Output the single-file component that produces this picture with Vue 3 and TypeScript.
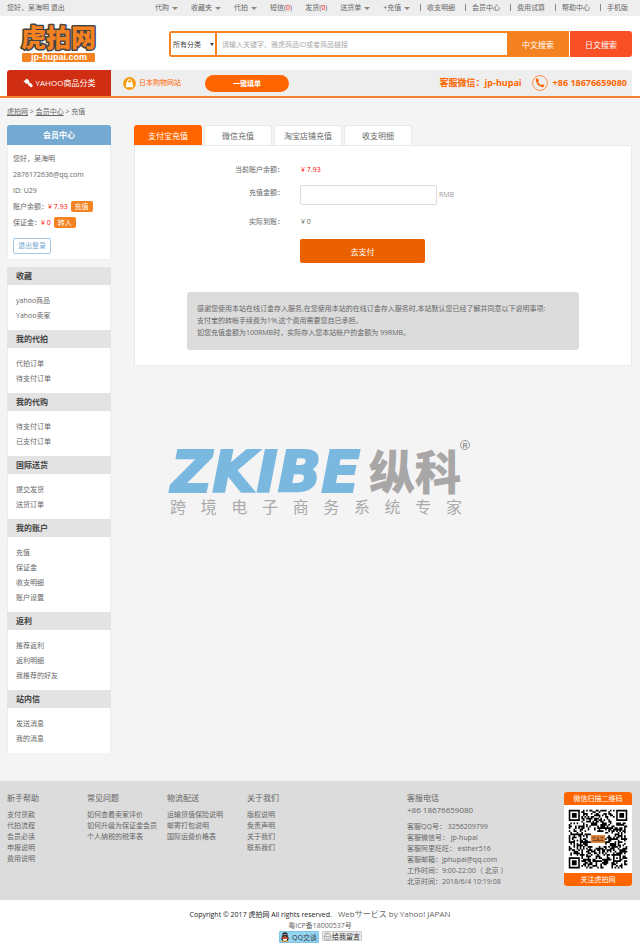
<script setup lang="ts">
import { ref } from 'vue'

interface MenuSection { title: string; items: string[] }

const leftMenus: { label: string; count?: string; drop?: boolean }[] = [
  { label: '代购', drop: true },
  { label: '收藏夹', drop: true },
  { label: '代拍', drop: true },
  { label: '短信', count: '0' },
  { label: '发货', count: '0' },
  { label: '送货单', drop: true },
  { label: '+充值', drop: true },
]
const rightMenus = ['收支明细', '会员中心', '费用试算', '帮助中心', '手机版']

const sections: MenuSection[] = [
  { title: '收藏', items: ['yahoo商品', 'Yahoo卖家'] },
  { title: '我的代拍', items: ['代拍订单', '待支付订单'] },
  { title: '我的代购', items: ['待支付订单', '已支付订单'] },
  { title: '国际送货', items: ['提交发货', '送货订单'] },
  { title: '我的账户', items: ['充值', '保证金', '收支明细', '账户设置'] },
  { title: '返利', items: ['推荐返利', '返利明细', '我推荐的好友'] },
  { title: '站内信', items: ['发送消息', '我的消息'] },
]

const tabs = ['支付宝充值', '微信充值', '淘宝店铺充值', '收支明细']
const activeTab = ref(0)
const keyword = ref('')
const amount = ref('')

const helpColumns: MenuSection[] = [
  { title: '新手帮助', items: ['支付货款', '代拍流程', '会员必读', '申报说明', '费用说明'] },
  { title: '常见问题', items: ['如何查看卖家评价', '如何升级为保证金会员', '个人纳税的税率表'] },
  { title: '物流配送', items: ['运输货值保险说明', '邮寄打包说明', '国际运费价格表'] },
  { title: '关于我们', items: ['版权说明', '免责声明', '关于我们', '联系我们'] },
]
const contacts = [
  '客服QQ号： 3256209799',
  '客服微信号： jp-hupai',
  '客服阿里旺旺： esther516',
  '客服邮箱：jphupai@qq.com',
  '工作时间：9:00-22:00（ 北京 ）',
  '北京时间：2018/6/4 10:19:08',
]
const slogan = Array.from('跨境电子商务系统专家')

const QR = 37
function finderModule(x: number, y: number): boolean | null {
  for (const [ox, oy] of [[0, 0], [QR - 7, 0], [0, QR - 7]]) {
    const dx = x - ox
    const dy = y - oy
    if (dx >= -1 && dx <= 7 && dy >= -1 && dy <= 7) {
      const d = Math.max(Math.abs(dx - 3), Math.abs(dy - 3))
      return d === 3 || d <= 1
    }
  }
  const a = Math.max(Math.abs(x - 30), Math.abs(y - 30))
  return a <= 2 ? a !== 1 : null
}
function buildQr(): string {
  let seed = 20180604
  let path = ''
  for (let y = 0; y < QR; y++) {
    let run = 0
    for (let x = 0; x <= QR; x++) {
      seed = (seed * 16807) % 2147483647
      const fixed = finderModule(x, y)
      const centre = Math.abs(x - 18) <= 4 && Math.abs(y - 18) <= 4
      const on = x < QR && (fixed !== null ? fixed : !centre && seed / 2147483647 < 0.5)
      if (on) {
        run++
      } else if (run > 0) {
        path += `M${x - run} ${y}h${run}v1.1h-${run}z`
        run = 0
      }
    }
  }
  return path
}
const qrPath = buildQr()
</script>

<template>
  <div class="page">
    <div class="topbar">
      <div class="greeting">您好，吴海明 <a href="#">退出</a></div>
      <nav class="top-left">
        <a v-for="m in leftMenus" :key="m.label" href="#">
          {{ m.label }}<template v-if="m.count">(<b>{{ m.count }}</b>)</template><i v-if="m.drop" class="caret"></i>
        </a>
      </nav>
      <nav class="top-right">
        <a v-for="m in rightMenus" :key="m" href="#">{{ m }}</a>
      </nav>
    </div>

    <header class="header">
      <a class="logo" href="#" aria-label="虎拍网">
        <svg width="76" height="38" viewBox="0 0 76 38">
          <text class="logo-cn" x="0" y="22">虎拍网</text>
          <rect x="1" y="28" width="73" height="9" rx="1" fill="#f58220" />
          <text class="logo-en" x="38" y="35" text-anchor="middle">jp-hupai.com</text>
        </svg>
      </a>
      <form class="search" @submit.prevent>
        <div class="search-box">
          <select aria-label="分类"><option>所有分类</option></select>
          <input v-model="keyword" type="text" aria-label="搜索" placeholder="请输入关键字、雅虎商品ID或者商品链接" />
        </div>
        <button type="submit" class="cn">中文搜索</button>
        <button type="button" class="jp">日文搜索</button>
      </form>
    </header>

    <div class="navbar">
      <a class="category" href="#">
        <svg width="10" height="10" viewBox="0 0 10 10" fill="#fff">
          <path d="M3.800.4 6.600 3.200 5.900 4l1 1 .6-.3L10 7.800 8.200 9.600 5.100 6.900l.2-.6-.9-.9-.8.700L.4 3.200 1.400 2.700 3.400.9z" />
        </svg>
        YAHOO商品分类
      </a>
      <div class="nav-rest">
        <a class="shops" href="#">
          <svg width="13" height="13" viewBox="0 0 13 13">
            <circle cx="6.500" cy="6.500" r="6.400" fill="#f39c12" />
            <path d="M3.500 5.300h6l.7 5H2.800z" fill="#fff" />
            <path d="M4.500 6V4.600a2 2 0 0 1 4 0V6" fill="none" stroke="#fff" stroke-width="1" />
          </svg>
          日本购物网站
        </a>
        <a class="pill" href="#">一键填单</a>
        <span class="wechat">客服微信：jp-hupai</span>
        <svg class="phone-icon" width="16" height="16" viewBox="0 0 16 16">
          <circle cx="8" cy="8" r="7.400" fill="none" stroke="#ff7a20" stroke-width="0.800" />
          <path d="M5 3.300 3.800 4.300c-.3 3.800 3.600 7.900 7.400 8l1.200-1.200c.2-.3.100-.5-.1-.7L10.800 9.300c-.3-.2-.6-.1-.8.1l-.7.700C8 9.500 6.700 8.200 6.100 6.900l.7-.7c.2-.2.200-.5.100-.8L5.800 3.500c-.2-.3-.5-.4-.8-.2z" fill="#ff6600" />
        </svg>
        <span class="phone">+86 18676659080</span>
      </div>
    </div>

    <div class="crumbs"><a href="#">虎拍网</a> &gt; <a href="#">会员中心</a> &gt; 充值</div>

    <div class="content">
      <aside class="sidebar">
        <section class="member">
          <h2>会员中心</h2>
          <div class="member-body">
            <p>您好，吴海明</p>
            <p>2876172636@qq.com</p>
            <p>ID: U29</p>
            <p>账户余额：<em>¥ 7.93</em> <button type="button" class="tag">充值</button></p>
            <p>保证金：<em>¥ 0</em> <button type="button" class="tag">转入</button></p>
            <button type="button" class="logout">退出登录</button>
          </div>
        </section>
        <nav class="menu">
          <section v-for="s in sections" :key="s.title">
            <h3>{{ s.title }}</h3>
            <ul>
              <li v-for="i in s.items" :key="i"><a href="#">{{ i }}</a></li>
            </ul>
          </section>
        </nav>
      </aside>

      <main class="main">
        <div class="tabs" role="tablist">
          <button
            v-for="(t, i) in tabs" :key="t" type="button" role="tab"
            :aria-selected="activeTab === i" :class="{ active: activeTab === i }" @click="activeTab = i"
          >{{ t }}</button>
        </div>
        <div class="panel">
          <form class="form" @submit.prevent>
            <span class="label">当前账户余额：</span>
            <span class="value red">¥ 7.93</span>
            <label class="label amount-label" for="amount">充值金额：</label>
            <span class="value amount"><input id="amount" v-model="amount" type="text" /><small>RMB</small></span>
            <span class="label">实际到账：</span>
            <span class="value">¥ 0</span>
            <button type="submit" class="pay">去支付</button>
          </form>
          <div class="notice">
            <p>感谢您使用本站在线订金存入服务,在您使用本站的在线订金存入服务时,本站默认您已经了解并同意以下说明事项:</p>
            <p>支付宝的转帐手续费为1%,这个费用需要您自已承担。</p>
            <p>如您充值金额为100RMB时，实际存入您本站帐户的金额为 99RMB。</p>
          </div>
        </div>
        <div class="watermark">
          <svg width="304" height="56" viewBox="0 0 304 56">
            <text class="wm-en" x="2" y="52">ZKIBE</text>
            <text class="wm-cn" x="200" y="49">纵科</text>
            <circle cx="296" cy="5" r="4.500" fill="none" stroke="#8f8f8f" stroke-width="0.900" />
            <text class="wm-r" x="296" y="8" text-anchor="middle">R</text>
          </svg>
          <div class="slogan"><span v-for="c in slogan" :key="c">{{ c }}</span></div>
        </div>
      </main>
    </div>

    <footer class="footer">
      <div class="footer-cols">
        <section v-for="c in helpColumns" :key="c.title">
          <h4>{{ c.title }}</h4>
          <ul><li v-for="i in c.items" :key="i"><a href="#">{{ i }}</a></li></ul>
        </section>
        <section>
          <h4>客服电话</h4>
          <div class="tel">+86 18676659080</div>
          <ul><li v-for="c in contacts" :key="c">{{ c }}</li></ul>
        </section>
      </div>
      <div class="qr">
        <div class="qr-bar">微信扫描二维码</div>
        <svg viewBox="-3 -3 43 43">
          <path :d="qrPath" fill="#000" />
          <rect x="14" y="16" width="9" height="5" fill="#d9853b" />
          <path d="M15 17h2v1h-2zM18 17h1v2h-1zM20 17h2v1h-2zM15 19h7v1h-7z" fill="#8a4a1c" />
        </svg>
        <div class="qr-bar">关注虎拍网</div>
      </div>
    </footer>

    <div class="legal">
      <p><strong>Copyright © 2017 虎拍网 All rights reserved.</strong><span>Webサービス by Yahoo! JAPAN</span></p>
      <p>粤ICP备18000537号</p>
      <div class="chat">
        <a class="qq" href="#">
          <svg width="10" height="10" viewBox="0 0 10 10">
            <ellipse cx="5" cy="6.400" rx="3.600" ry="3" fill="#222" />
            <ellipse cx="5" cy="6.800" rx="2.200" ry="2.200" fill="#fff" />
            <circle cx="5" cy="3" r="2.700" fill="#222" />
            <circle cx="4" cy="2.600" r="0.700" fill="#fff" />
            <circle cx="6" cy="2.600" r="0.700" fill="#fff" />
            <path d="M3.300 3.900h3.400L5 4.800z" fill="#f7a700" />
            <path d="M2 5q3 1.500 6 0v1.200q-3 1.400-6 0z" fill="#e2231a" />
            <path d="M1.500 8.800h3v1h-3zM5.500 8.800h3v1h-3z" fill="#f7a700" />
          </svg>
          QQ交谈
        </a>
        <a class="msg" href="#">
          <svg width="9" height="9" viewBox="0 0 9 9" fill="none" stroke="#999" stroke-width="0.700">
            <circle cx="4.500" cy="5" r="3.400" />
            <path d="M1.200 4.500h6.600M3 6.500q1.500 1 3 0M2 2l2-1h2" />
          </svg>
          给我留言
        </a>
      </div>
    </div>
  </div>
</template>

<style>
body {
  background: #f4f4f4;
}
</style>

<style scoped>
.page {
  font: 7px/12px "Open Sans", "Noto Sans CJK SC", sans-serif;
  color: #666;
}
.page * {
  box-sizing: border-box;
}
a {
  color: inherit;
  text-decoration: none;
}
p, h2, h3, h4, ul {
  margin: 0;
  padding: 0;
  list-style: none;
}
button, input, select {
  font-family: inherit;
  font-size: 7px;
  color: inherit;
  border: 0;
  margin: 0;
  padding: 0;
  outline: 0;
}
button {
  cursor: pointer;
}
svg {
  display: block;
  flex: none;
  overflow: visible;
}

.topbar {
  display: flex;
  align-items: center;
  height: 16px;
  padding: 0 12px 0 7px;
  background: #eee;
}
.greeting {
  flex: 0 0 148px;
}
.top-left, .top-right {
  display: flex;
  white-space: nowrap;
}
.top-left {
  gap: 13px;
}
.top-left a {
  display: flex;
  align-items: center;
}
.top-left b {
  color: #f00;
  font-weight: 400;
}
.caret {
  margin-left: 3px;
  border: 3px solid transparent;
  border-top-color: #888;
  border-bottom: 0;
}
.top-right {
  gap: 10px;
  margin-left: auto;
}
.top-right a::before {
  content: "";
  display: inline-block;
  width: 1px;
  height: 7px;
  margin-right: 6px;
  background: #888;
  vertical-align: -1px;
}

.header {
  display: flex;
  align-items: flex-start;
  justify-content: space-between;
  gap: 72px;
  padding: 9px 8px 7px 21px;
  background: #fff;
}
.logo-cn {
  font: 900 25px "Noto Sans CJK SC", sans-serif;
  fill: #f58220;
  stroke: #444;
  stroke-width: 3px;
  stroke-linejoin: round;
  paint-order: stroke;
}
.logo-en {
  font: bold 9px "Liberation Sans", sans-serif;
  fill: #fff;
}
.search {
  flex: 1;
  display: flex;
  height: 26px;
  margin-top: 6px;
}
.search-box {
  position: relative;
  flex: 1;
  display: flex;
  border: 2px solid #f58220;
  border-right: 0;
  border-radius: 3px 0 0 3px;
}
.search-box::after {
  content: "";
  position: absolute;
  left: 39px;
  top: 10px;
  border: 2px solid transparent;
  border-top: 3px solid #444;
  border-bottom: 0;
  pointer-events: none;
}
.search select {
  width: 46px;
  padding: 0 3px 0 2px;
  appearance: none;
  border-right: 2px solid #f58220;
  background: #fff;
  color: #444;
}
.search input {
  flex: 1;
  min-width: 0;
  padding: 0 5px;
  background: #fff;
}
.search input::placeholder {
  color: #aaa;
}
.search button {
  width: 62px;
  color: #fff;
  font-size: 8px;
}
.search .cn {
  background: #f58220;
}
.search .jp {
  margin-left: 1px;
  background: #f95125;
  border-radius: 0 3px 3px 0;
}

.navbar {
  display: flex;
  height: 28px;
  padding: 0 8px 0 7px;
  background: #fff;
  border-bottom: 2px solid #f08030;
}
.category {
  flex: 0 0 104px;
  display: flex;
  align-items: center;
  justify-content: center;
  gap: 3px;
  background: #cf2e12;
  border-radius: 3px 0 0 0;
  color: #fff;
  font-size: 8px;
}
.nav-rest {
  flex: 1;
  display: flex;
  align-items: center;
  padding: 0 5px 0 12px;
  background: #eee;
  border-radius: 0 3px 0 0;
  color: #ff6600;
  white-space: nowrap;
}
.shops {
  display: flex;
  align-items: center;
  gap: 3px;
}
.pill {
  width: 84px;
  margin-left: 24px;
  border-radius: 9px;
  background: #ff6600;
  color: #fff;
  font-weight: 600;
  line-height: 17px;
  text-align: center;
}
.wechat, .phone {
  font-size: 9px;
  font-weight: 700;
}
.wechat {
  margin-left: auto;
}
.phone-icon {
  margin: 0 5px 0 10px;
}

.crumbs {
  padding: 8px 7px 7px;
}
.crumbs a {
  text-decoration: underline;
}

.content {
  display: flex;
  gap: 23px;
  padding: 0 8px 28px 7px;
}
.sidebar {
  flex: 0 0 104px;
}
.member {
  margin-bottom: 7px;
}
.member h2 {
  border-radius: 3px 3px 0 0;
  background: #74a9d1;
  color: #fff;
  font-size: 8px;
  line-height: 20px;
  text-align: center;
}
.member-body {
  padding: 6px 5px 5px;
  border: solid #eee;
  border-width: 0 1px 1px;
  background: #fff;
}
.member-body p {
  line-height: 16px;
}
.member-body em {
  color: #f00;
  font-style: normal;
}
.tag {
  width: 22px;
  margin-left: 1px;
  border-radius: 2px;
  background: #f58220;
  color: #fff;
  line-height: 11px;
}
.logout {
  display: block;
  width: 38px;
  margin-top: 7px;
  border: 1px solid #a5cbe8;
  border-radius: 2px;
  background: #fff;
  color: #74a9d1;
  line-height: 14px;
}
.menu h3 {
  padding-left: 9px;
  background: #e3e3e3;
  color: #444;
  font-size: 8px;
  font-weight: 600;
  line-height: 18px;
}
.menu ul {
  padding: 8px 8px 7px;
  border: solid #eee;
  border-width: 0 1px;
  background: #fff;
  line-height: 15px;
}

.main {
  flex: 1;
  min-width: 0;
}
.tabs {
  display: flex;
  gap: 2px;
}
.tabs button {
  width: 68px;
  height: 20px;
  border: 1px solid #e8e8e8;
  border-bottom: 0;
  border-radius: 3px 3px 0 0;
  background: #fff;
  font-size: 8px;
}
.tabs .active {
  border-color: #ff6600;
  background: #ff6600;
  color: #fff;
}
.panel {
  padding: 18px 52px 15px 0;
  border: 1px solid #eaeaea;
  background: #fff;
}
.form {
  display: grid;
  grid-template-columns: 149px 1fr;
  column-gap: 16px;
}
.label {
  text-align: right;
}
.label, .value {
  margin-bottom: 11px;
}
.value {
  padding-left: 1px;
}
.red {
  color: #f00;
}
.amount {
  display: flex;
  align-items: center;
  gap: 2px;
  margin-top: -2px;
  padding: 0;
}
.amount input {
  width: 137px;
  height: 20px;
  padding: 0 4px;
  border: 1px solid #ddd;
  border-radius: 2px;
  background: #fff;
}
.amount small {
  color: #999;
  font-size: 7px;
}
.pay {
  grid-column: 2;
  width: 125px;
  height: 24px;
  border-radius: 2px;
  background: #eb6100;
  color: #fff;
  font-size: 8px;
}
.notice {
  margin: 29px 0 0 52px;
  padding: 11px 10px;
  border-radius: 3px;
  background: #dcdcdc;
}
.watermark {
  width: 304px;
  margin: 74px 0 0 35px;
}
.wm-en {
  font: italic bold 57px "DejaVu Sans", sans-serif;
  fill: #7ab8e0;
  stroke: #7ab8e0;
  stroke-width: 2px;
}
.wm-cn {
  font: bold 46px "Noto Sans CJK SC", sans-serif;
  fill: #a8a6a6;
  stroke: #a8a6a6;
  stroke-width: 1px;
}
.wm-r {
  font: bold 7px "Liberation Sans", sans-serif;
  fill: #8f8f8f;
}
.slogan {
  display: flex;
  justify-content: space-between;
  padding: 0 11px 0 1px;
  color: #aaa;
  font-size: 16px;
  line-height: 22px;
}

.footer {
  display: flex;
  align-items: flex-start;
  padding: 11px 8px 13px 7px;
  background: #dcdcdc;
}
.footer-cols {
  flex: 1;
  display: grid;
  grid-template-columns: 80fr 80fr 80fr 160fr 157fr;
  white-space: nowrap;
}
.footer h4, .tel {
  font-size: 8px;
  font-weight: 400;
}
.footer ul {
  margin-top: 5px;
  line-height: 11px;
}
.qr {
  flex: 0 0 68px;
  overflow: hidden;
  border-radius: 3px;
  background: #fff;
}
.qr-bar {
  background: #ff6600;
  color: #fff;
  line-height: 13px;
  text-align: center;
}

.legal {
  padding: 8px 0 9px;
  background: #fff;
  line-height: 11px;
  text-align: center;
}
.legal strong {
  margin-right: 6px;
  color: #222;
  font-weight: 400;
}
.legal span {
  font-size: 8px;
}
.chat {
  display: flex;
  justify-content: center;
  gap: 3px;
}
.chat a {
  display: flex;
  align-items: center;
  justify-content: center;
  gap: 2px;
  width: 40px;
  height: 12px;
  border-radius: 1px;
  color: #333;
  white-space: nowrap;
}
.chat .qq {
  background: #94d5f2;
  border: 1px solid #7cc4e6;
}
.chat .msg {
  height: 10px;
  border: 1px solid #ccc;
  background: #e9e9e9;
  gap: 0;
}
</style>
